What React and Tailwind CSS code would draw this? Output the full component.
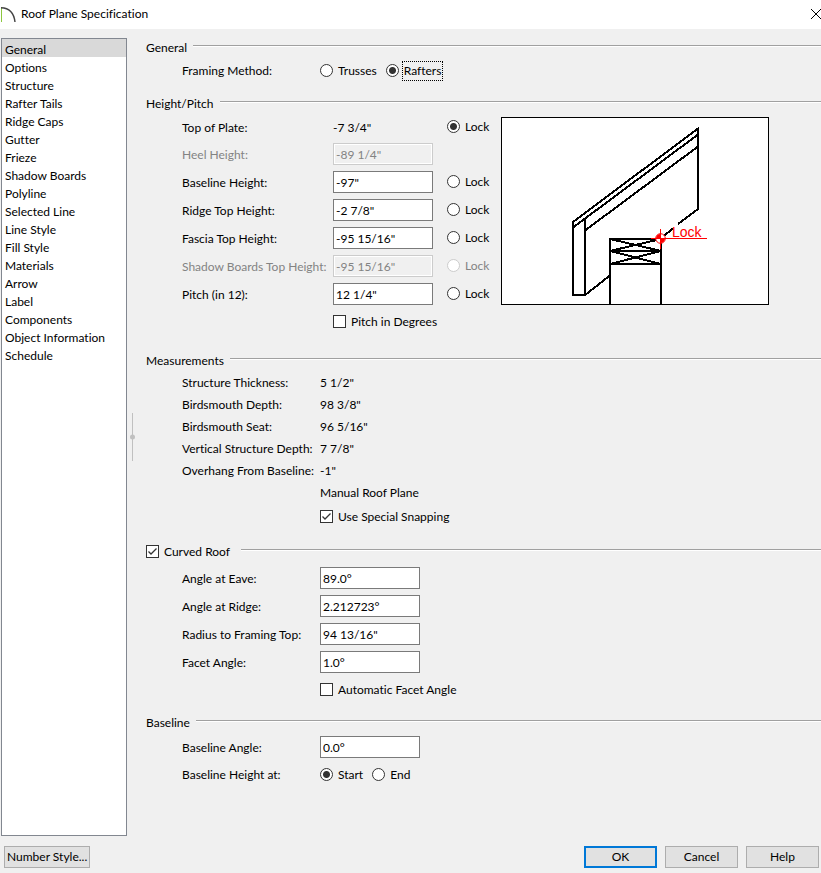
import React, { useState } from "react";

const pages = ["General", "Options", "Structure", "Rafter Tails", "Ridge Caps", "Gutter", "Frieze", "Shadow Boards", "Polyline", "Selected Line", "Line Style", "Fill Style", "Materials", "Arrow", "Label", "Components", "Object Information", "Schedule"];

const heights = [
	{ id: "heel", label: "Heel Height:", value: '-89 1/4"', disabled: true, noLock: true },
	{ id: "baseline", label: "Baseline Height:", value: '-97"' },
	{ id: "ridge", label: "Ridge Top Height:", value: '-2 7/8"' },
	{ id: "fascia", label: "Fascia Top Height:", value: '-95 15/16"' },
	{ id: "shadow", label: "Shadow Boards Top Height:", value: '-95 15/16"', disabled: true },
	{ id: "pitch", label: "Pitch (in 12):", value: '12 1/4"' },
];

const measurements = [
	["Structure Thickness:", '5 1/2"'],
	["Birdsmouth Depth:", '98 3/8"'],
	["Birdsmouth Seat:", '96 5/16"'],
	["Vertical Structure Depth:", '7 7/8"'],
	["Overhang From Baseline:", '-1"'],
];

const curve = [
	{ id: "eave", label: "Angle at Eave:", value: "89.0°" },
	{ id: "angle-ridge", label: "Angle at Ridge:", value: "2.212723°" },
	{ id: "radius", label: "Radius to Framing Top:", value: '94 13/16"' },
	{ id: "facet", label: "Facet Angle:", value: "1.0°" },
];

const Rule = () => <div className="flex-1 h-[2px] mb-1 bg-[#a0a0a0] border-b border-white" />;

const Section = ({ title, className, children }) => (
	<section className={className}>
		<div className="flex items-center gap-[6px] h-5">
			<h2>{title}</h2>
			<Rule />
		</div>
		<div className="pl-9">{children}</div>
	</section>
);

const Radio = ({ label, focused, ...props }) => (
	<label className={`flex items-center gap-[3px] ${props.disabled ? "text-[#838383]" : ""}`}>
		<input type="radio" className="appearance-none size-[13px] mb-[2px] rounded-full border border-[#333] bg-white checked:bg-[radial-gradient(circle,#333_3px,white_4px)] disabled:border-[#ccc]" {...props} />
		<span className={`px-px leading-[18px] border ${focused ? "border-dotted border-black" : "border-transparent"}`}>{label}</span>
	</label>
);

const Check = ({ label, checked }) => {
	const [on, setOn] = useState(!!checked);
	return (
		<label className="flex items-center gap-[5px]">
			<span className="grid mb-[2px]">
				<input type="checkbox" checked={on} onChange={() => setOn(!on)} className="col-start-1 row-start-1 appearance-none size-[13px] border border-[#333] bg-white" />
				{on && (
					<svg viewBox="0 0 13 13" className="col-start-1 row-start-1 size-[13px] pointer-events-none" fill="none" stroke="#333" strokeWidth="1.3">
						<path d="M2.5 6.5 L5 9 L10.5 3.5" />
					</svg>
				)}
			</span>
			<span>{label}</span>
		</label>
	);
};

const TextBox = (props) => <input type="text" className="w-[100px] h-[22px] px-[2px] border border-[#7a7a7a] bg-white disabled:border-[#ccc] disabled:bg-[#f0f0f0] disabled:text-[#838383] disabled:shadow-[inset_0_0_0_1px_white]" {...props} />;

const Diagram = () => (
	<svg viewBox="0 0 268 188" className="w-[268px] h-[188px] mt-[3px] bg-white shrink-0" fill="none" stroke="black" strokeWidth="2">
		<rect x="0.5" y="0.5" width="267" height="187" strokeWidth="1" />
		<g shapeRendering="crispEdges">
			{/* rafter */}
			<path d="M72 105 L197 11.5 V92 L177 107 M172 111.5 L160 121" />
			<path d="M72 110.5 L197 17.5 M84 113.5 L197 29.5" />
			{/* fascia */}
			<path d="M72 104 V178 H84 V102 M84 178 L109 158.5" />
			{/* wall and plates */}
			<path d="M109 187 V122 H160 V187 M109 134 H160 M109 147 H160" />
			<path d="M109 122 L160 134 M109 134 L160 122 M109 134 L160 147 M109 147 L160 134" />
		</g>
		<g stroke="red" strokeWidth="1">
			<circle cx="159.5" cy="121.5" r="4.8" fill="white" />
			<path d="M159.5 121.5 V117 A4.5 4.5 0 0 0 155 121.5 Z M159.5 121.5 V126 A4.5 4.5 0 0 0 164 121.5 Z" fill="red" stroke="none" />
			<path d="M150 121.5 H206 M159.5 112 V132" shapeRendering="crispEdges" />
		</g>
		<text x="171" y="120" fill="red" stroke="none" className="font-['Liberation_Sans',sans-serif] text-[14px]">
			Lock
		</text>
	</svg>
);

const PushButton = ({ className, children }) => <button className={`h-[22px] bg-[#e1e1e1] ${className}`}>{children}</button>;

const App = () => {
	const [page, setPage] = useState("General");
	const [method, setMethod] = useState("Rafters");
	const [lock, setLock] = useState("plate");
	const [end, setEnd] = useState("Start");

	return (
		<div className="min-h-screen flex flex-col bg-[#f0f0f0] text-black text-[12px] leading-[18px] font-['Lato','Noto_Sans',sans-serif] [font-variant-ligatures:none] whitespace-nowrap">
			<header className="flex items-center h-[29px] pb-[2px] bg-white">
				<svg viewBox="0 0 16 16" className="size-4 mr-[5px]" fill="none">
					<path d="M1.5 1 V16" stroke="#8cc63f" />
					<path d="M1 1.7 C9 2 14 7 15 16" stroke="#444" strokeWidth="1.4" />
				</svg>
				<h1 className="flex-1">Roof Plane Specification</h1>
				<button aria-label="Close">
					<svg viewBox="0 0 10 10" className="size-[10px]" stroke="black">
						<path d="M0 0 L10 10 M10 0 L0 10" />
					</svg>
				</button>
			</header>

			<div className="flex flex-1 pt-[9px]">
				<nav className="w-[126px] ml-px shrink-0 bg-white border border-[#828790]">
					{pages.map((name) => (
						<button key={name} onClick={() => setPage(name)} className={`block w-full h-[18px] px-[3px] pt-[2px] text-left ${page === name ? "bg-[#d9d9d9]" : ""}`}>
							{name}
						</button>
					))}
				</nav>

				<div className="w-[19px] shrink-0 flex items-center pl-[3px]">
					<svg viewBox="0 0 5 48" className="w-[5px] h-12" fill="#c0c0c0">
						<rect x="2" width="1" height="48" />
						<circle cx="2.5" cy="24" r="2.5" />
					</svg>
				</div>

				<main className="flex-1">
					<Section title="General">
						<div className="flex items-center h-[26px]">
							<span className="w-[138px]">Framing Method:</span>
							<div className="flex gap-[7px]">
								{["Trusses", "Rafters"].map((m) => (
									<Radio key={m} name="method" label={m} checked={method === m} focused={method === m} onChange={() => setMethod(m)} />
								))}
							</div>
						</div>
					</Section>

					<Section title="Height/Pitch" className="mt-[10px]">
						<div className="flex">
							<div className="w-[319px] shrink-0">
								<div className="flex items-center h-[26px]">
									<span className="w-[151px] pt-[2px]">Top of Plate:</span>
									<span className="w-[114px] pt-[2px]">-7 3/4"</span>
									<Radio name="lock" label="Lock" checked={lock === "plate"} onChange={() => setLock("plate")} />
								</div>
								{heights.map((row) => (
									<div key={row.id} className="flex items-center h-7">
										<label htmlFor={row.id} className={`w-[151px] pt-[2px] ${row.disabled ? "text-[#838383]" : ""}`}>
											{row.label}
										</label>
										<div className="w-[114px] flex">
											<TextBox id={row.id} defaultValue={row.value} disabled={row.disabled} />
										</div>
										{!row.noLock && <Radio name="lock" label="Lock" disabled={row.disabled} checked={lock === row.id} onChange={() => setLock(row.id)} />}
									</div>
								))}
								<div className="flex items-center h-7 pl-[151px]">
									<Check label="Pitch in Degrees" />
								</div>
							</div>
							<Diagram />
						</div>
					</Section>

					<Section title="Measurements" className="mt-[15px]">
						<dl className="pt-px">
							{measurements.map(([label, value]) => (
								<div key={label} className="flex items-center h-[22px]">
									<dt className="w-[138px]">{label}</dt>
									<dd>{value}</dd>
								</div>
							))}
						</dl>
						<div className="pl-[138px]">
							<p className="flex items-center h-[22px]">Manual Roof Plane</p>
							<div className="flex items-center h-[26px]">
								<Check label="Use Special Snapping" checked />
							</div>
						</div>
					</Section>

					<section className="mt-3">
						<div className="flex items-center gap-[11px] h-5">
							<Check label="Curved Roof" checked />
							<Rule />
						</div>
						<div className="pl-9 pt-[2px]">
							{curve.map((row) => (
								<div key={row.id} className="flex items-center h-7">
									<label htmlFor={row.id} className="w-[138px] pt-[2px]">
										{row.label}
									</label>
									<TextBox id={row.id} defaultValue={row.value} />
								</div>
							))}
							<div className="flex items-center h-7 pl-[138px]">
								<Check label="Automatic Facet Angle" />
							</div>
						</div>
					</section>

					<Section title="Baseline" className="mt-[9px]">
						<div className="flex items-center h-7">
							<label htmlFor="baseline-angle" className="w-[138px] pt-[2px]">
								Baseline Angle:
							</label>
							<TextBox id="baseline-angle" defaultValue="0.0°" />
						</div>
						<div className="flex items-center h-7">
							<span className="w-[138px]">Baseline Height at:</span>
							<div className="flex gap-[7px]">
								{["Start", "End"].map((e) => (
									<Radio key={e} name="end" label={e} checked={end === e} onChange={() => setEnd(e)} />
								))}
							</div>
						</div>
					</Section>
				</main>
			</div>

			<footer className="flex gap-2 pt-[10px] pb-[5px] pl-1 pr-[2px]">
				<PushButton className="px-[2px] mr-auto border border-[#adadad]">Number Style...</PushButton>
				<PushButton className="w-[73px] border-2 border-[#0078d7]">OK</PushButton>
				<PushButton className="w-[73px] border border-[#adadad]">Cancel</PushButton>
				<PushButton className="w-[73px] border border-[#adadad]">Help</PushButton>
			</footer>
		</div>
	);
};

export default App;
